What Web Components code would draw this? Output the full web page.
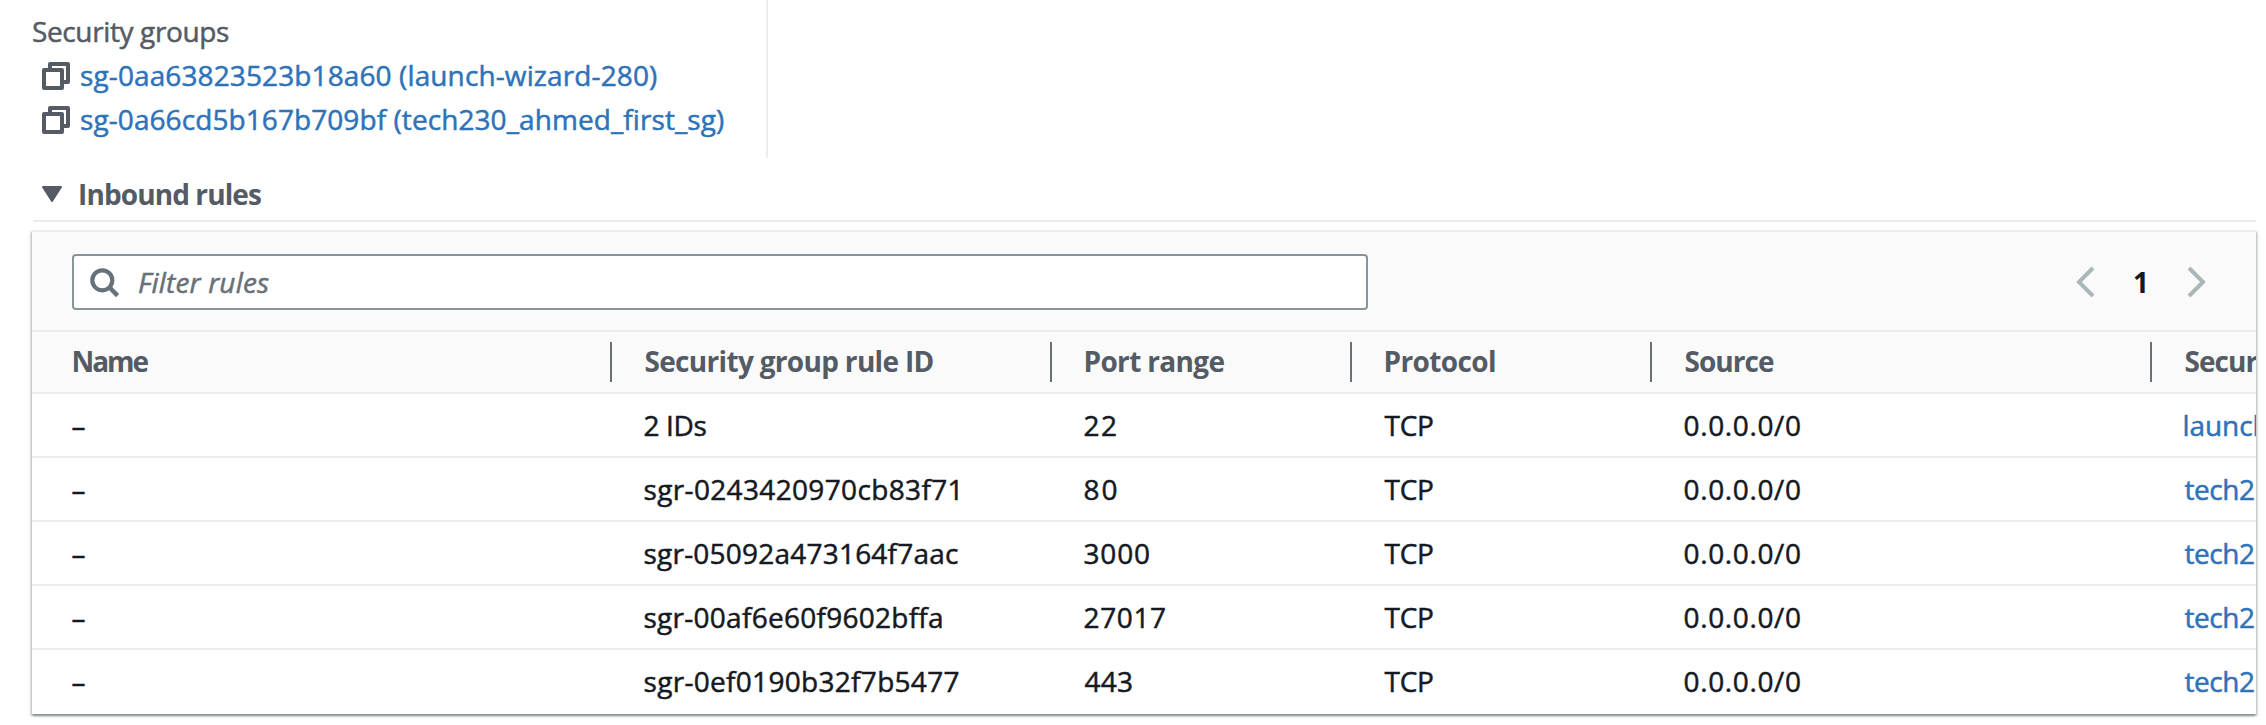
<!DOCTYPE html>
<html lang="en">
<head>
<meta charset="utf-8">
<title>Security groups</title>
<style>
html, body { margin: 0; background: #fff; height: 725px; overflow: hidden; }
body { font: 400 28px/44px "Open Sans", "Noto Sans", sans-serif; color: #16191f; -webkit-text-stroke: .5px currentColor; }
</style>
</head>
<body>
<security-panel></security-panel>
<script>
const define = (name, html, setup) => customElements.define(name, class extends HTMLElement {
  connectedCallback() {
    if (this.shadowRoot) return;
    const t = document.createElement('template');
    t.innerHTML = html;
    this.attachShadow({ mode: 'open' }).append(t.content.cloneNode(true));
    if (setup) setup.call(this, this.shadowRoot);
  }
});

// Text whose glyphs span exactly w pixels, starting at the left edge of its box.
const ctx = document.createElement('canvas').getContext('2d');
define('fit-text', `<style>:host{display:inline-block;white-space:pre}</style><slot></slot>`, function () {
  const s = getComputedStyle(this), text = this.textContent, w = +this.getAttribute('w');
  ctx.font = `${s.fontStyle} ${s.fontWeight} ${s.fontSize} ${s.fontFamily}`;
  const m = ctx.measureText(text);
  const ink = m.actualBoundingBoxRight + m.actualBoundingBoxLeft;
  this.style.marginLeft = m.actualBoundingBoxLeft + 'px';
  if (w && text.length > 1) this.style.letterSpacing = (w - ink) / (text.length - 1) + 'px';
});

define('copy-icon', `<style>:host{display:block;width:28px;height:28px}svg{display:block}</style>
<svg width="28" height="28" fill="none" stroke="#545b64" stroke-width="4" stroke-linejoin="round"><path d="M8 8V2H26V20H20"/><rect x="2" y="8" width="18" height="18"/></svg>`);

define('group-link', `<style>
:host{display:flex;align-items:center;height:44px;padding-left:9px;color:#2e73b8}
copy-icon{margin:2px 11px 0 0}</style><copy-icon></copy-icon><slot></slot>`);

define('group-list', `<style>
:host{display:block;box-sizing:border-box;width:735px;height:158px;padding-top:9px;border-right:2px solid #eaeded}
.label{height:44px;color:#545b64}</style>
<div class="label"><fit-text w="196">Security groups</fit-text></div>
<group-link><fit-text w="576">sg-0aa63823523b18a60 (launch-wizard-280)</fit-text></group-link>
<group-link><fit-text w="643">sg-0a66cd5b167b709bf (tech230_ahmed_first_sg)</fit-text></group-link>`);

define('section-header', `<style>
:host{display:flex;align-items:center;box-sizing:border-box;height:64px;padding:9px 0 0 9px;border-bottom:2px solid #ebebeb;color:#545b64;font-weight:700;-webkit-text-stroke:0}
svg{margin-right:18px}</style>
<svg width="20" height="16"><path d="M1 1H19L10 15Z" fill="#545b64" stroke="#545b64" stroke-width="2" stroke-linejoin="round"/></svg><slot></slot>`);

define('filter-box', `<style>
:host{display:flex;align-items:center;box-sizing:border-box;width:1296px;height:56px;padding-left:16px;background:#fff;border:2px solid #879596;border-radius:4px;color:#687078;font-style:italic}
svg{margin:1px 19px 0 0}</style>
<svg width="30" height="30" fill="none" stroke="#687078"><circle cx="12.3" cy="12.3" r="10" stroke-width="4.2"/><path d="M19.3 19.3L27.6 27.6" stroke-width="4.4"/></svg><slot></slot>`);

define('page-nav', `<style>
:host{display:flex;align-items:center;color:#16191f;font-weight:700;-webkit-text-stroke:0}
svg{fill:none;stroke:#aab7b8;stroke-width:4}
span{width:92px;text-align:center}</style>
<svg width="19" height="32"><path d="M17 2L3 16L17 30"/></svg><span><slot></slot></span><svg width="19" height="32"><path d="M2 2L16 16L2 30"/></svg>`);

define('rule-row', `<style>
:host{display:grid;grid-template-columns:580px 440px 300px 300px 500px 104px;box-sizing:border-box;height:64px;border-bottom:2px solid #ebebeb;align-items:center;overflow:hidden}
:host([head]){height:62px;background:#fafafa;color:#545b64;font-weight:700;-webkit-text-stroke:0}
:host([last]){height:64px;border-bottom-color:transparent}
::slotted(div){box-sizing:border-box;height:44px;padding-left:32.5px;overflow:hidden;white-space:nowrap}
::slotted(div:first-child){padding-left:40.5px}
:host([head]) ::slotted(div){height:40px;padding-left:33.5px;line-height:39px;border-right:2px solid #687078}
:host([head]) ::slotted(div:first-child){padding-left:41.5px}
:host([head]) ::slotted(div:last-child){border-right:0}
</style><slot></slot>`);

define('rules-table', `<style>
:host{display:block;margin:8px 0 0 -1px;width:2224px;height:484px;box-sizing:border-box;border-top:2px solid #ebebeb;background:#fff;box-shadow:0 2px 2px 0 rgba(0,28,36,.3),2px 2px 2px 0 rgba(0,28,36,.15),-2px 2px 2px 0 rgba(0,28,36,.15)}
.tools{display:flex;align-items:center;justify-content:space-between;box-sizing:border-box;height:100px;padding:2px 50px 0 40px;background:#fafafa;border-bottom:2px solid #ebebeb}
.link{color:#2e73b8}
</style>
<div class="tools"><filter-box><fit-text w="130">Filter rules</fit-text></filter-box><page-nav>1</page-nav></div>
<rule-row head><div><fit-text w="75">Name</fit-text></div><div><fit-text w="288">Security group rule ID</fit-text></div><div><fit-text w="139">Port range</fit-text></div><div><fit-text w="109.5">Protocol</fit-text></div><div><fit-text w="88.5">Source</fit-text></div><div><fit-text w="73">Secur</fit-text></div></rule-row>
<div class="rows"></div>`, function (root) {
  const rows = [
    ['2 IDs', 62, '22', 31.5, 'launch', 83],
    ['sgr-0243420970cb83f71', 313, '80', 32, 'tech2', 69.5],
    ['sgr-05092a473164f7aac', 313.5, '3000', 64.5, 'tech2', 69.5],
    ['sgr-00af6e60f9602bffa', 297.5, '27017', 80.5, 'tech2', 69.5],
    ['sgr-0ef0190b32f7b5477', 314, '443', 47.5, 'tech2', 69.5]
  ];
  const cell = (t, w, c = '') => `<div class="${c}"><fit-text w="${w}">${t}</fit-text></div>`;
  root.querySelector('.rows').innerHTML = rows.map((r, i) =>
    `<rule-row ${i === 4 ? 'last' : ''}>` + cell('–', 0) + cell(r[0], r[1]) + cell(r[2], r[3]) +
    cell('TCP', 48.5) + cell('0.0.0.0/0', 115.5) + cell(r[4], r[5], 'link') + '</rule-row>').join('');
});

define('security-panel', `<style>:host{display:block;padding-left:33px;width:2223px}</style>
<group-list></group-list>
<section-header><fit-text w="181">Inbound rules</fit-text></section-header>
<rules-table></rules-table>`);
</script>
</body>
</html>
